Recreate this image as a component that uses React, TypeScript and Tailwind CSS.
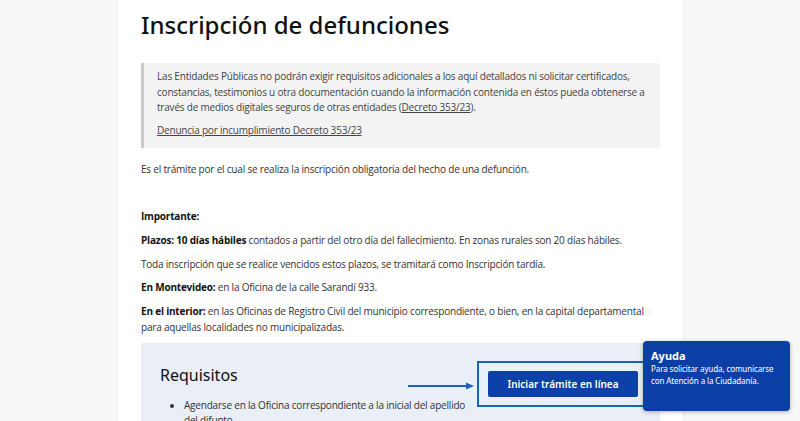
import React from "react";

export default function App() {
  return (
    <div className="relative h-[421px] w-[800px] overflow-hidden bg-[#f8f8f8]" style={{ fontFamily: '"Open Sans", sans-serif' }}>
      <div className="ml-[118px] h-[421px] w-[565px] bg-white px-[23px] pt-[9px] shadow-[0_0_3px_rgba(0,0,0,0.08)]">
        <h1 className="text-[24px] font-medium leading-[32px] text-[#111]" style={{ fontFamily: '"Noto Sans", sans-serif' }}>
          Inscripción de defunciones
        </h1>
        <div className="mt-[22px] border-l-[3px] border-[#c9c9c9] bg-[#f3f3f3] pl-[13px] pr-[14px] pt-[6px] pb-[9px] text-[10px] leading-[15.5px] tracking-[-0.2px] text-[#444]">
          <p>
            Las Entidades Públicas no podrán exigir requisitos adicionales a los aquí detallados ni solicitar certificados, constancias, testimonios u otra documentación cuando la información contenida en éstos pueda obtenerse a través de medios digitales seguros de otras entidades (<span className="underline">Decreto 353/23</span>).
          </p>
          <p className="mt-[7.5px] underline">Denuncia por incumplimiento Decreto 353/23</p>
        </div>
        <div className="mt-[14px] text-[10px] leading-[15.5px] tracking-[-0.2px] text-[#333]">
          <p>Es el trámite por el cual se realiza la inscripción obligatoria del hecho de una defunción.</p>
          <p className="mt-[31.5px] font-bold text-[#111]">Importante:</p>
          <p className="mt-[8.5px]"><b className="text-[#111]">Plazos: 10 días hábiles</b> contados a partir del otro día del fallecimiento. En zonas rurales son 20 días hábiles.</p>
          <p className="mt-[8.5px]">Toda inscripción que se realice vencidos estos plazos, se tramitará como Inscripción tardía.</p>
          <p className="mt-[8px]"><b className="text-[#111]">En Montevideo:</b> en la Oficina de la calle Sarandí 933.</p>
          <p className="mt-[8.5px]"><b className="text-[#111]">En el interior:</b> en las Oficinas de Registro Civil del municipio correspondiente, o bien, en la capital departamental para aquellas localidades no municipalizadas.</p>
        </div>
        <div className="mt-[8px] flex h-[100px] bg-[#e9eef7] pl-[19px]">
          <div className="w-[300px] shrink-0 pt-[22px]">
            <h2 className="text-[16px] leading-[20px] text-[#111]" style={{ fontFamily: '"Noto Sans", sans-serif' }}>Requisitos</h2>
            <ul className="mt-[12.5px] w-[312px] list-disc pl-[24px] text-[10px] leading-[15.5px] tracking-[-0.2px] text-[#333]">
              <li>Agendarse en la Oficina correspondiente a la inicial del apellido del difunto</li>
            </ul>
          </div>
          <div className="flex items-start pt-[18px]">
            <svg width="68" height="8" viewBox="0 0 68 8" className="ml-[-52px] mt-[21px] shrink-0">
              <line x1="0" y1="4" x2="60" y2="4" stroke="#1565c0" strokeWidth="2" />
              <polygon points="58,0.5 66,4 58,7.5" fill="#1565c0" />
            </svg>
            <div className="ml-[1px] flex h-[46px] w-[172px] shrink-0 items-center justify-center border-2 border-[#1565c0]">
              <div className="flex h-[26px] w-[150px] items-center justify-center rounded-[2px] bg-[#0b41a8] text-[10px] font-semibold text-white" style={{ fontFamily: '"Noto Sans", sans-serif' }}>
                Iniciar trámite en línea
              </div>
            </div>
          </div>
        </div>
      </div>
      <div className="absolute left-[643px] top-[341px] h-[70px] w-[147px] rounded-[4px] bg-[#0c3fa6] pl-[8px] pr-[4px] pt-[8px] text-white shadow-[0_1px_4px_rgba(0,0,0,0.3)]" style={{ fontFamily: '"Noto Sans", sans-serif' }}>
        <div className="text-[11px] font-bold leading-[14px]">Ayuda</div>
        <div className="mt-[0px] text-[8px] leading-[12px] tracking-[-0.1px]">Para solicitar ayuda, comunicarse con Atención a la Ciudadanía.</div>
      </div>
    </div>
  );
}
